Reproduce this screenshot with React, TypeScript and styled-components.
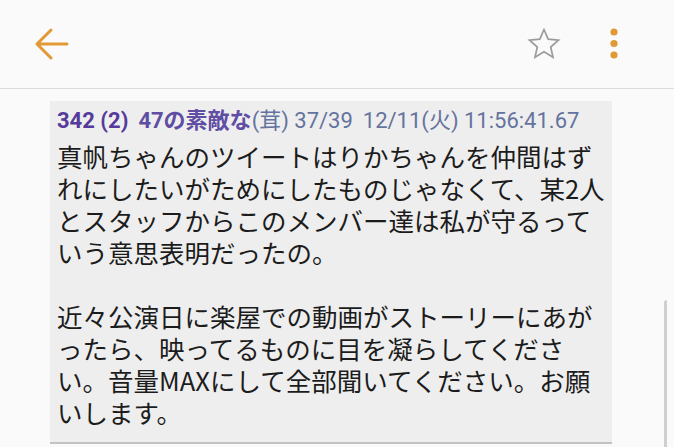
import React from 'react'
import styled, { createGlobalStyle } from 'styled-components'

const GlobalStyle = createGlobalStyle`
  html, body {
    margin: 0;
    padding: 0;
    background: #fafafa;
  }
`

const bodyLines = [
  '真帆ちゃんのツイートはりかちゃんを仲間はず',
  'れにしたいがためにしたものじゃなくて、某2人',
  'とスタッフからこのメンバー達は私が守るって',
  'いう意思表明だったの。',
  '',
  '近々公演日に楽屋での動画がストーリーにあが',
  'ったら、映ってるものに目を凝らしてくださ',
  'い。音量MAXにして全部聞いてください。お願',
  'いします。',
]

const BackIcon: React.FC = () => (
  <svg width="36" height="34" viewBox="0 0 36 34" fill="none">
    <path
      d="M33 17H4M17 3L3 17l14 14"
      stroke="#e29a36"
      strokeWidth="3"
      strokeLinecap="round"
      strokeLinejoin="round"
    />
  </svg>
)

const StarIcon: React.FC = () => (
  <svg width="34" height="34" viewBox="0 0 34 34" fill="none">
    <path
      d="M17 2.5l4.2 9.6 10.3 1-7.8 6.9 2.3 10.2L17 24.8l-9 5.4 2.3-10.2-7.8-6.9 10.3-1z"
      stroke="#9b9b9b"
      strokeWidth="1.7"
      strokeLinejoin="miter"
    />
  </svg>
)

const MoreIcon: React.FC = () => (
  <svg width="10" height="34" viewBox="0 0 10 34" fill="#e09a35">
    <circle cx="5" cy="5" r="3.6" />
    <circle cx="5" cy="16.5" r="3.6" />
    <circle cx="5" cy="28" r="3.6" />
  </svg>
)

const App: React.FC = () => {
  return (
    <Page>
      <GlobalStyle />
      <TopBar>
        <IconButton $width={36}>
          <BackIcon />
        </IconButton>
        <Actions>
          <IconButton $width={34}>
            <StarIcon />
          </IconButton>
          <IconButton $width={10}>
            <MoreIcon />
          </IconButton>
        </Actions>
      </TopBar>
      <Content>
        <PostCard>
          <MetaLine>
            <PostNo>342 (2)</PostNo>
            <Gap />
            <PosterName>47の素敵な</PosterName>
            <MetaText>(茸) 37/39</MetaText>
            <Gap />
            <MetaText>12/11(火) 11:56:41.67</MetaText>
          </MetaLine>
          <PostBody>
            {bodyLines.map((line, index) => (
              <BodyLine key={index}>{line || '\u00a0'}</BodyLine>
            ))}
          </PostBody>
        </PostCard>
      </Content>
      <ScrollEdge />
    </Page>
  )
}
export default App

const Page = styled.div`
  position: relative;
  width: 674px;
  height: 447px;
  overflow: hidden;
  background: #fafafa;
`

const TopBar = styled.header`
  height: 89px;
  box-sizing: border-box;
  border-bottom: 1px solid #dcdcdc;
  display: flex;
  align-items: center;
  justify-content: space-between;
  padding: 0 55px 0 34px;
`

const Actions = styled.div`
  display: flex;
  align-items: center;
  gap: 48px;
`

const IconButton = styled.div<{ $width: number }>`
  width: ${(p) => p.$width}px;
  height: 34px;
  display: flex;
  align-items: center;
  justify-content: center;
`

const Content = styled.main`
  padding: 12px 0 0 50px;
`

const PostCard = styled.article`
  width: 562px;
  box-sizing: border-box;
  background: #eeeeee;
  border-bottom: 2px solid #c2c2c2;
  padding: 7px 8px 14px 7px;
`

const MetaLine = styled.div`
  display: flex;
  align-items: baseline;
  font-family: Roboto, 'Noto Sans CJK JP', sans-serif;
  font-size: 22px;
  line-height: 26px;
  white-space: pre;
  margin-bottom: 6px;
`

const Gap = styled.span`
  width: 10px;
`

const PostNo = styled.span`
  color: #553a9b;
  font-weight: 700;
`

const PosterName = styled.span`
  color: #5f4ea3;
  font-weight: 700;
`

const MetaText = styled.span`
  color: #65739f;
`

const PostBody = styled.div`
  font-family: 'Noto Sans CJK JP', sans-serif;
  font-size: 25.5px;
  line-height: 32px;
  color: #1c1c1c;
`

const BodyLine = styled.div`
  white-space: nowrap;
  height: 32px;
`

const ScrollEdge = styled.div`
  position: absolute;
  left: 664px;
  top: 300px;
  bottom: 0;
  width: 3px;
  background: #cfcfcf;
  border-top-left-radius: 3px;
`
